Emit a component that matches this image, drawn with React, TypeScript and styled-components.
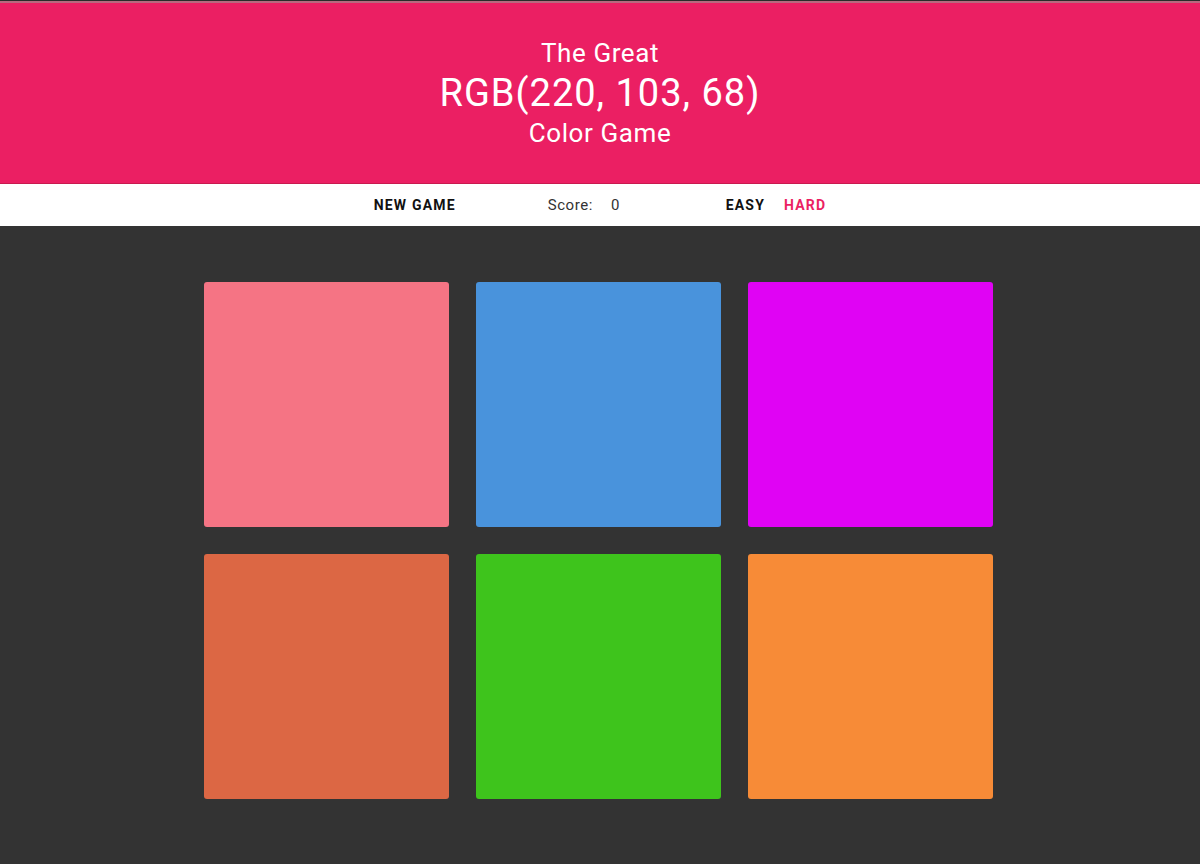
import styled, { createGlobalStyle } from "styled-components";

const PINK = "#eb1f63";

const squares = [
    "rgb(245, 116, 132)",
    "rgb(73, 147, 220)",
    "rgb(224, 3, 244)",
    "rgb(220, 103, 68)",
    "rgb(62, 196, 28)",
    "rgb(247, 139, 55)",
];

const GlobalStyle = createGlobalStyle`
    html, body {
        margin: 0;
        padding: 0;
        background: #333333;
        font-family: Roboto, "Liberation Sans", sans-serif;
    }
`;

const App = () => {
    return (
        <>
            <GlobalStyle />
            <Page>
                <Header>
                    <Small>The Great</Small>
                    <ColorDisplay>RGB(220, 103, 68)</ColorDisplay>
                    <Small>Color Game</Small>
                </Header>

                <Stripe>
                    <Reset>New Game</Reset>
                    <Score>
                        Score:<ScoreValue>0</ScoreValue>
                    </Score>
                    <Modes>
                        <Mode>Easy</Mode>
                        <Mode $selected>Hard</Mode>
                    </Modes>
                </Stripe>

                <Board>
                    {squares.map((color, i) => (
                        <Square key={i} style={{ backgroundColor: color }} />
                    ))}
                </Board>
            </Page>
        </>
    );
};

export default App;

const Page = styled.div`
    min-height: 864px;
    background: #333333;
    border-top: 1px solid #2a2a2a;
`;

const Header = styled.h1`
    margin: 0;
    background: ${PINK};
    border-top: 2px solid #b9687f;
    border-bottom: 1px solid #c8194f;
    color: #ffffff;
    text-align: center;
    font-weight: 400;
    padding: 31px 0 31px;
    display: flex;
    flex-direction: column;
    align-items: center;
`;

const Small = styled.span`
    font-size: 26px;
    line-height: 38px;
    letter-spacing: 0.6px;
`;

const ColorDisplay = styled.span`
    font-size: 38px;
    line-height: 42px;
    letter-spacing: 1px;
`;

const Stripe = styled.div`
    height: 42px;
    background: #ffffff;
    display: flex;
    align-items: center;
    justify-content: center;
    font-size: 14px;
`;

const Reset = styled.button`
    border: none;
    background: none;
    padding: 0;
    font: inherit;
    font-weight: 700;
    text-transform: uppercase;
    letter-spacing: 1.2px;
    color: #111111;
    width: 174px;
    text-align: left;
`;

const Score = styled.div`
    color: #333333;
    font-size: 15px;
    letter-spacing: 0.6px;
    width: 178px;
`;

const ScoreValue = styled.span`
    margin-left: 18px;
`;

const Modes = styled.div`
    display: flex;
    gap: 19px;
`;

const Mode = styled.button<{ $selected?: boolean }>`
    border: none;
    background: none;
    padding: 0;
    font: inherit;
    font-weight: 700;
    text-transform: uppercase;
    letter-spacing: 1.2px;
    color: ${(p) => (p.$selected ? PINK : "#111111")};
`;

const Board = styled.div`
    width: 789px;
    margin: 56px auto 0;
    padding-right: 4px;
    display: grid;
    grid-template-columns: repeat(3, 245px);
    gap: 27px;
`;

const Square = styled.div`
    width: 245px;
    height: 245px;
    border-radius: 3px;
`;
